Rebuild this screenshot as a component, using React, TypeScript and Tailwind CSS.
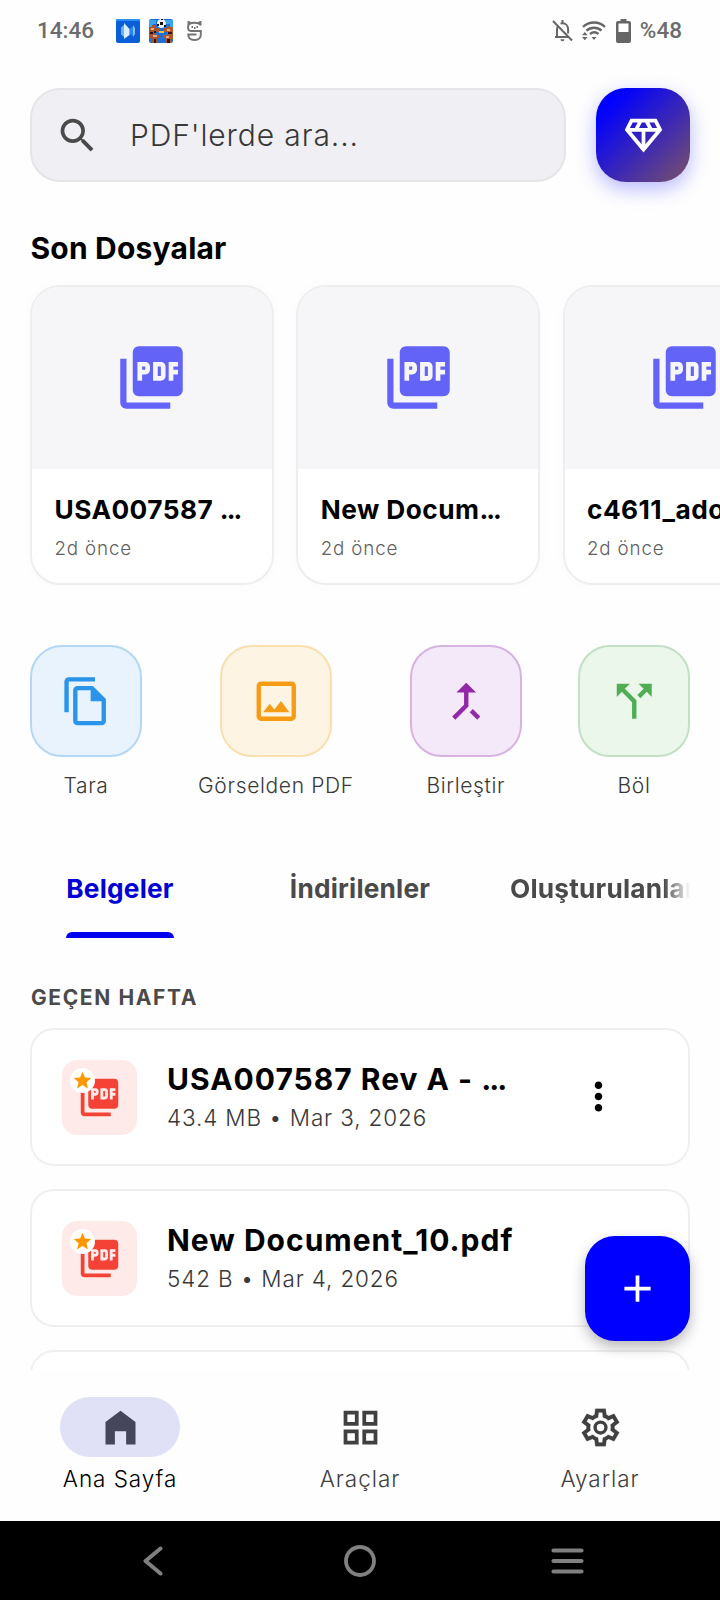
import { ReactNode } from "react";
import {
  MdAdd,
  MdCallMerge,
  MdCallSplit,
  MdMoreVert,
  MdOutlineDiamond,
  MdOutlineImage,
  MdPictureAsPdf,
  MdSearch,
  MdStar,
} from "react-icons/md";

const recentFiles = [
  { name: "USA007587 ", cut: true, time: "2d önce" },
  { name: "New Docum", cut: true, time: "2d önce" },
  { name: "c4611_adobe", cut: false, time: "2d önce" },
];

const documents = [
  { name: "USA007587 Rev A - ", cut: true, info: "43.4 MB • Mar 3, 2026" },
  { name: "New Document_10.pdf", cut: false, info: "542 B • Mar 4, 2026" },
];

function StatusBar() {
  return (
    <div className="flex h-[60px] shrink-0 items-center pt-[2px] pr-[38px] pl-[37px] font-['Roboto',sans-serif] text-[22.5px] font-medium text-[#6c6c6c]">
      <span className="w-[79px]">14:46</span>
      <svg className="mr-[9px]" width="24" height="24" viewBox="0 0 24 24">
        <rect width="24" height="24" rx="2" fill="#0a5fd8" />
        <rect width="24" height="2" rx="1" fill="#2f8cf5" />
        <path d="M5 8.500L8 6v12l-3-2.500z" fill="#6fb2fa" />
        <path d="M8 4l5.500 6v6L8 20z" fill="#d8efff" />
        <path d="M14 10l3-3v10l-3-2z" fill="#2f86e8" />
        <path d="M17 6l2 3v6l-2 3z" fill="#7dbdf8" />
      </svg>
      <svg className="mr-[14px]" width="24" height="24" viewBox="0 0 24 24">
        <rect width="24" height="24" rx="2" fill="#1d6fd6" />
        <path d="M0 1h7v4H4v3H0zM17 1h7v7h-3V5h-4z" fill="#3ba3f2" />
        <path d="M0 8h3V6h4v3h3v4H7v3h4v3H8v5H2v-5H0z" fill="#a5532f" />
        <path d="M24 8h-3V7h-3v2h-3v4h3v3h-4v3h3v5h5v-4h2z" fill="#b0582d" />
        <path d="M2 9h3v2H2zM4 16h4v2H4zM18 10h3v2h-3zM17 17h3v2h-3z" fill="#f0a878" />
        <path d="M1 13h3v2H1zM5 12h2v2H5zM19 13h4v2h-4zM5 20h2v4H5zM18 20h3v4h-3zM9 3h2v2H9z" fill="#2a1620" />
        <path d="M10 12h5v2h-5z" fill="#e8c33c" />
        <circle cx="12.500" cy="4.500" r="4.500" fill="#f4f4f4" />
        <path d="M11 3h3v3h-3zM8 5h2v2H8zM15 6h2v2h-2zM12 0h2v1h-2z" fill="#151515" />
      </svg>
      <svg width="15" height="20" viewBox="0 0 15 20" fill="none" stroke="#737373" strokeWidth="1.900">
        <path d="M13.800 4.500C13 2.500 11 1.800 7.500 1.800S1 2.700 1 6s1 4 3 4h9.800v3.500c0 4-2.500 5.500-6.300 5.500S1.200 17.500 1.200 13.500h8.300" />
        <path d="M1.500 4V.8L4.200 2.500M13.500 4V.8l-2.700 1.700M4.500 6h1.500M7 7h1.500M9.500 6H11" />
      </svg>
      <div className="ml-auto flex items-center">
        <svg className="mr-[9px]" width="21" height="22" viewBox="0 0 21 22" fill="none" stroke="#666666" strokeWidth="2">
          <path d="M1 1l19 19.500" />
          <path d="M3 17h13M5 16V9.500c0-1.200.3-2.300.9-3.200M8.500 3.700c.7-.3 1.300-.4 2-.4 3.400 0 5.600 2.700 5.600 6.200v4M10.500 0v3" />
          <path d="M8.500 19.200h4c0 1.100-.9 2-2 2s-2-.9-2-2z" fill="#666666" stroke="none" />
        </svg>
        <svg className="mr-[10px]" width="24" height="20" viewBox="0 0 24 20" fill="none" stroke="#666666" strokeWidth="2.400">
          <path d="M1 6c6-6 16-6 22 0M4.500 9.700c4.300-4 10.800-4 15 0M8 13c2.500-2 6-2 8.500 0" />
          <path d="M9.500 16h5L12 19zM0 14.300L2.800 11l2.800 3.300zM0 16h5.600l-2.800 3.300z" fill="#666666" stroke="none" />
        </svg>
        <svg className="mr-[9px]" width="15" height="24" viewBox="0 0 15 24" fill="#666666">
          <path fillRule="evenodd" d="M4.500 0h6v2H13a2 2 0 012 2v18a2 2 0 01-2 2H2a2 2 0 01-2-2V4a2 2 0 012-2h2.500zM2.500 4.500V13h10V4.500z" />
        </svg>
        <span>%48</span>
      </div>
    </div>
  );
}

function FileCopyIcon() {
  return (
    <svg width="52.5" height="52.5" viewBox="0 0 24 24" fill="currentColor">
      <path d="M16 1H4c-1.100 0-2 .9-2 2v14h2V3h12z" />
      <path fillRule="evenodd" d="M15 5l6 6v10c0 1.100-.9 2-2 2H8c-1.100 0-2-.9-2-2V7c0-1.100.9-2 2-2zM8 7v14h11v-9h-5V7z" />
    </svg>
  );
}

function HomeIcon() {
  return (
    <svg width="45" height="45" viewBox="0 0 24 24" fill="currentColor">
      <path d="M4 21V9l8-6 8 6v12h-5v-7H9v7z" />
    </svg>
  );
}

function GridIcon() {
  return (
    <svg width="45" height="45" viewBox="0 0 24 24" fill="none" stroke="currentColor" strokeWidth="2">
      <path d="M4 4h6v6H4zM14 4h6v6h-6zM4 14h6v6H4zM14 14h6v6h-6z" />
    </svg>
  );
}

function GearIcon() {
  return (
    <svg width="45" height="45" viewBox="0 0 24 24" fill="currentColor">
      <path
        stroke="currentColor"
        strokeWidth="0.100"
        d="m9.250 22l-.4-3.200q-.325-.125-.612-.3t-.563-.375L4.700 19.375l-2.750-4.750l2.575-1.950Q4.500 12.500 4.500 12.338v-.675q0-.163.025-.338L1.950 9.375l2.750-4.750l2.975 1.250q.275-.2.575-.375t.6-.3l.4-3.200h5.500l.4 3.200q.325.125.613.3t.562.375l2.975-1.250l2.750 4.750l-2.575 1.950q.025.175.025.338v.674q0 .163-.05.338l2.575 1.950l-2.750 4.750l-2.950-1.250q-.275.2-.575.375t-.6.3l-.4 3.200ZM11 20h1.975l.35-2.650q.775-.2 1.438-.588t1.212-.937l2.475 1.025l.975-1.700l-2.150-1.625q.125-.35.175-.737T17.500 12q0-.4-.05-.787t-.175-.738l2.150-1.625l-.975-1.700l-2.475 1.050q-.55-.575-1.213-.963t-1.437-.587L13 4h-1.975l-.35 2.650q-.775.2-1.438.588t-1.212.937L5.550 7.150l-.975 1.700l2.150 1.600q-.125.375-.175.750t-.05.8q0 .4.05.775t.175.750l-2.150 1.625l.975 1.700l2.475-1.050q.55.575 1.213.963t1.437.587L11 20Z"
      />
      <circle cx="12" cy="12" r="2.900" fill="none" stroke="currentColor" strokeWidth="1.800" />
    </svg>
  );
}

function Ellipsis() {
  return <span className="tracking-[-2px]">...</span>;
}

function QuickAction({ label, tile, children }: { label: string; tile: string; children: ReactNode }) {
  return (
    <div className="flex flex-col items-center">
      <div className={`flex size-[112px] items-center justify-center rounded-[32px] border-2 ${tile}`}>{children}</div>
      <span className="mt-[14px] text-[21px] leading-[30px] font-light tracking-[0.65px] text-[#383838]">{label}</span>
    </div>
  );
}

function NavItem({ label, active = false, children }: { label: string; active?: boolean; children: ReactNode }) {
  return (
    <div className={`flex flex-1 flex-col items-center ${active ? "text-black" : "text-[#404040]"}`}>
      <div className={`flex h-[60px] w-[120px] items-center justify-center rounded-full ${active ? "bg-[#e0e0f6] text-[#45455c]" : ""}`}>
        {children}
      </div>
      <span className="mt-[7px] text-[22.5px] leading-[30px] font-light tracking-[0.95px]">{label}</span>
    </div>
  );
}

export default function App() {
  return (
    <div className="relative flex h-[1600px] w-[720px] flex-col overflow-hidden bg-[#fefefe] font-['Inter',sans-serif] text-black">
      <StatusBar />

      <main className="min-h-0 flex-1 overflow-hidden">
        <div className="flex gap-[30px] px-[30px] pt-[28px]">
          <div className="flex h-[94px] flex-1 items-center rounded-[30px] border-2 border-[#e5e5e8] bg-[#f0eff4] pl-[23px]">
            <MdSearch className="size-[45px] text-[#4a4a4a]" />
            <span className="ml-[30px] text-[30px] leading-[40px] font-light tracking-[0.9px] text-[#383838]">PDF'lerde ara...</span>
          </div>
          <button className="flex size-[94px] items-center justify-center rounded-[30px] bg-linear-to-br/srgb from-[#0000ff] from-15% to-[#7a5266] text-white shadow-[0_7px_20px_rgba(0,0,255,0.28)]">
            <MdOutlineDiamond className="size-[45px]" />
          </button>
        </div>

        <h2 className="mt-[46px] px-[30.5px] text-[30px] leading-[40px] font-bold tracking-[0.2px]">Son Dosyalar</h2>

        <div className="mt-[17px] flex gap-[22.5px] pl-[30px]">
          {recentFiles.map((file) => (
            <div
              key={file.name}
              className="h-[300px] w-[243.75px] shrink-0 overflow-hidden rounded-[30px] border-2 border-[#eeeef0] bg-white shadow-[0_0_14px_rgba(0,0,0,0.02)]"
            >
              <div className="flex h-[182px] items-center justify-center bg-[#f6f6f9] pb-[2px]">
                <MdPictureAsPdf className="size-[75px] text-[#6363f8]" />
              </div>
              <div className="px-[22.5px] pt-[23px] whitespace-nowrap">
                <div className="text-[26.25px] leading-[36px] font-bold tracking-[0.45px]">
                  {file.name}
                  {file.cut && <Ellipsis />}
                </div>
                <div className="mt-[6px] text-[18.75px] leading-[30px] font-light tracking-[0.85px] text-[#606060]">{file.time}</div>
              </div>
            </div>
          ))}
        </div>

        <div className="mt-[60px] flex justify-between px-[30px]">
          <QuickAction label="Tara" tile="border-[#b3d7f5] bg-[#e8f3fe] text-[#2994ea]">
            <FileCopyIcon />
          </QuickAction>
          <QuickAction label="Görselden PDF" tile="border-[#f9dfae] bg-[#fef4e4] text-[#f59b14]">
            <MdOutlineImage className="size-[52.5px]" />
          </QuickAction>
          <QuickAction label="Birleştir" tile="border-[#d6b3e0] bg-[#f4e9f8] text-[#9228a8]">
            <MdCallMerge className="size-[52.5px]" />
          </QuickAction>
          <QuickAction label="Böl" tile="border-[#c2e0c4] bg-[#ecf7ec] text-[#4fae53]">
            <MdCallSplit className="size-[52.5px]" />
          </QuickAction>
        </div>

        <div className="mt-[69px] flex text-[26.25px] leading-[37px] font-bold tracking-[0.2px] text-[#4a4a4a]">
          <div className="flex w-[240px] flex-col items-center">
            <div className="text-[#0000d6]">
              Belgeler
              <div className="mt-[25px] h-[6px] rounded-t-[6px] bg-[#0000f0]" />
            </div>
          </div>
          <div className="w-[240px] text-center">İndirilenler</div>
          <div className="h-[37px] w-[240px] px-[30px]">
            <div className="overflow-hidden whitespace-nowrap mask-r-from-[154px] mask-r-to-[180px]">Oluşturulanlar</div>
          </div>
        </div>

        <h3 className="mt-[45px] px-[31px] text-[21px] leading-[30px] font-bold tracking-[1.6px] text-[#4a4a4a]">GEÇEN HAFTA</h3>

        <div className="mt-[15px] flex flex-col gap-[23px] px-[30px]">
          {documents.map((doc) => (
            <div key={doc.name} className="flex h-[138px] items-center rounded-[24px] border-2 border-[#efeff0] bg-white px-[30px]">
              <div className="relative flex size-[75px] items-center justify-center rounded-[15px] bg-[#feebe9]">
                <MdPictureAsPdf className="size-[45px] text-[#f44336]" />
                <span className="absolute top-[8px] left-[8px] flex size-[25px] items-center justify-center rounded-full bg-white">
                  <MdStar className="size-[21px] text-[#ff9800]" />
                </span>
              </div>
              <div className="ml-[30px] h-[76px] flex-1 whitespace-nowrap">
                <div className="text-[30px] leading-[40px] font-bold tracking-[1px]">
                  {doc.name}
                  {doc.cut && <Ellipsis />}
                </div>
                <div className="text-[22.5px] leading-[37px] font-light tracking-[0.85px] text-[#383838]">{doc.info}</div>
              </div>
              <button className="mr-[15px] flex size-[90px] items-center justify-center pb-[2px]">
                <MdMoreVert className="size-[45px]" />
              </button>
            </div>
          ))}
          <div className="h-[138px] rounded-[24px] border-2 border-[#efeff0] bg-white" />
        </div>
      </main>

      <nav className="flex h-[230px] shrink-0 flex-col">
        <div className="flex h-[151px] pt-[27px]">
          <NavItem label="Ana Sayfa" active>
            <HomeIcon />
          </NavItem>
          <NavItem label="Araçlar">
            <GridIcon />
          </NavItem>
          <NavItem label="Ayarlar">
            <GearIcon />
          </NavItem>
        </div>
        <div className="flex h-[79px] items-center justify-between bg-black pr-[136px] pl-[143px]">
          <svg width="20" height="30" viewBox="0 0 20 30" fill="none" stroke="#808080" strokeWidth="4" strokeLinecap="round" strokeLinejoin="round">
            <path d="M17.500 2.500L2.500 15l15 12.500" />
          </svg>
          <svg className="ml-[6px]" width="32" height="32" viewBox="0 0 32 32" fill="none" stroke="#808080" strokeWidth="3.800">
            <circle cx="16" cy="16" r="14" />
          </svg>
          <svg width="33" height="26" viewBox="0 0 33 26" fill="none" stroke="#808080" strokeWidth="4.200" strokeLinecap="round">
            <path d="M2.500 2.500h28M2.500 13h28M2.500 23.500h28" />
          </svg>
        </div>
      </nav>

      <button className="absolute top-[1236px] left-[585px] flex size-[105px] items-center justify-center rounded-[30px] bg-[#0000ff] text-white shadow-[0_6px_14px_rgba(0,0,0,0.28)]">
        <MdAdd className="size-[45px]" />
      </button>
    </div>
  );
}
